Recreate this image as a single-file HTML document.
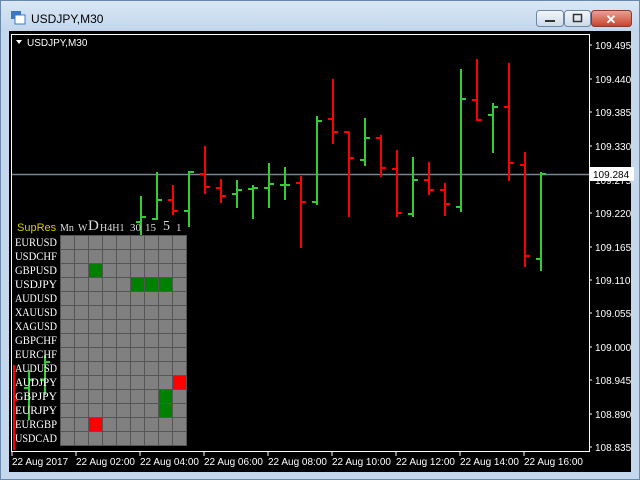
<!DOCTYPE html>
<html><head><meta charset="utf-8"><style>
body{margin:0;width:640px;height:480px;overflow:hidden;background:#c4d7ec;font-family:"Liberation Sans",sans-serif}
.g{position:absolute;left:60px;top:235px;}
</style></head><body>
<svg width="640" height="480" xmlns="http://www.w3.org/2000/svg" style="position:absolute;left:0;top:0">
<defs><linearGradient id="tb" x1="0" y1="0" x2="0" y2="1"><stop offset="0" stop-color="#dbe8f6"/><stop offset="1" stop-color="#c2d6ec"/></linearGradient>
<linearGradient id="bt" x1="0" y1="0" x2="0" y2="1"><stop offset="0" stop-color="#f4f7fb"/><stop offset="1" stop-color="#cdd9e8"/></linearGradient>
<linearGradient id="cl" x1="0" y1="0" x2="0" y2="1"><stop offset="0" stop-color="#e9a595"/><stop offset="1" stop-color="#c7412b"/></linearGradient></defs>
<rect x="0" y="0" width="640" height="480" fill="#c4d7ec"/>
<rect x="0" y="0" width="640" height="31" fill="url(#tb)"/>
<rect x="0.5" y="0.5" width="639" height="479" fill="none" stroke="#6a88aa"/>
<rect x="11" y="11" width="10" height="8" fill="#3b78c4"/><rect x="15" y="15" width="10" height="9" fill="#fff" stroke="#3b78c4"/>
<text x="31" y="23" font-size="12" fill="#000">USDJPY,M30</text>
<rect x="536.5" y="10.5" width="27" height="16" rx="3" fill="url(#bt)" stroke="#6f86a3"/>
<rect x="545" y="20" width="10" height="2" fill="#333"/>
<rect x="564.5" y="10.5" width="26" height="16" rx="3" fill="url(#bt)" stroke="#6f86a3"/>
<rect x="573.5" y="14.5" width="8" height="7" fill="none" stroke="#333" stroke-width="1.5"/>
<rect x="591.5" y="10.5" width="40" height="16" rx="3" fill="url(#cl)" stroke="#8b3a2c"/>
<text x="611" y="24" font-size="13" font-weight="bold" fill="#fff" text-anchor="middle">✕</text>
<rect x="9" y="31" width="622" height="441" fill="#000"/>
<rect x="11.5" y="34.5" width="578" height="417" fill="none" stroke="#fff"/>
<polygon points="16,40 22,40 19,44" fill="#fff"/>
<text x="27" y="46" font-size="10" fill="#fff">USDJPY,M30</text>
<g font-size="10" fill="#fff">
<text x="595" y="49">109.495</text><text x="595" y="83">109.440</text><text x="595" y="116">109.385</text><text x="595" y="150">109.330</text><text x="595" y="184">109.275</text><text x="595" y="217">109.220</text><text x="595" y="251">109.165</text><text x="595" y="284">109.110</text><text x="595" y="317">109.055</text><text x="595" y="351">109.000</text><text x="595" y="384">108.945</text><text x="595" y="418">108.890</text><text x="595" y="451">108.835</text>
</g>
<g stroke="#fff"><path d="M589 45h3M589 79h3M589 112h3M589 146h3M589 180h3M589 213h3M589 247h3M589 280h3M589 313h3M589 347h3M589 380h3M589 414h3M589 447h3"/>
<path d="M12 452v4M76 452v4M140 452v4M204 452v4M268 452v4M332 452v4M396 452v4M460 452v4M524 452v4"/></g>
<g font-size="10" fill="#fff">
<text x="12" y="465">22 Aug 2017</text><text x="76" y="465">22 Aug 02:00</text><text x="140" y="465">22 Aug 04:00</text><text x="204" y="465">22 Aug 06:00</text><text x="268" y="465">22 Aug 08:00</text><text x="332" y="465">22 Aug 10:00</text><text x="396" y="465">22 Aug 12:00</text><text x="460" y="465">22 Aug 14:00</text><text x="524" y="465">22 Aug 16:00</text>
</g>
<line x1="12" y1="174.5" x2="589" y2="174.5" stroke="#7a8594" stroke-width="1.5"/>
<rect x="590" y="167" width="44" height="14" fill="#fff"/>
<text x="593" y="178" font-size="10" fill="#000">109.284</text>
<g stroke-width="2" fill="none">
<g stroke="#32cd32">
<path d="M141 196v40M136 222h5M141 217h5"/>
<path d="M157 172v48M152 219h5M157 200h5"/>
<path d="M189 171v56M184 211h5M189 172h5"/>
<path d="M237 180v28M232 194h5M237 190h5"/>
<path d="M253 185v34M248 189h5M253 188h5"/>
<path d="M269 163v45M264 188h5M269 184h5"/>
<path d="M285 167v33M280 185h5M285 185h5"/>
<path d="M317 116v89M312 202h5M317 121h5"/>
<path d="M365 118v48M360 160h5M365 138h5"/>
<path d="M413 157v60M408 214h5M413 180h5"/>
<path d="M461 69v143M456 207h5M461 99h5"/>
<path d="M493 103v50M488 115h5M493 107h5"/>
<path d="M541 172v99M536 259h5M541 174h5"/>
<path d="M29 370v50M24 388h5M29 380h5"/>
<path d="M45 355v40M40 380h5M45 362h5"/>
</g>
<g stroke="#f00">
<path d="M173 185v30M168 200h5M173 211h5"/>
<path d="M205 146v48M200 174h5M205 187h5"/>
<path d="M221 179v24M216 188h5M221 196h5"/>
<path d="M301 176v72M296 183h5M301 202h5"/>
<path d="M333 79v65M328 119h5M333 132h5"/>
<path d="M349 132v85M344 132h5M349 158h5"/>
<path d="M381 135v42M376 138h5M381 168h5"/>
<path d="M397 150v67M392 169h5M397 213h5"/>
<path d="M429 162v33M424 180h5M429 190h5"/>
<path d="M445 183v33M440 190h5M445 204h5"/>
<path d="M477 59v62M472 100h5M477 120h5"/>
<path d="M509 63v118M504 107h5M509 163h5"/>
<path d="M525 152v115M520 165h5M525 256h5"/>
<path d="M14 365v85M14 400h3"/>
</g>
</g>
<g font-family="Liberation Serif,serif" font-size="12" fill="#fff" lengthAdjust="spacingAndGlyphs">
<text x="15" y="246" textLength="42" lengthAdjust="spacingAndGlyphs">EURUSD</text><text x="15" y="260" textLength="42" lengthAdjust="spacingAndGlyphs">USDCHF</text><text x="15" y="274" textLength="42" lengthAdjust="spacingAndGlyphs">GBPUSD</text><text x="15" y="288" textLength="42" lengthAdjust="spacingAndGlyphs">USDJPY</text><text x="15" y="302" textLength="42" lengthAdjust="spacingAndGlyphs">AUDUSD</text><text x="15" y="316" textLength="42" lengthAdjust="spacingAndGlyphs">XAUUSD</text><text x="15" y="330" textLength="42" lengthAdjust="spacingAndGlyphs">XAGUSD</text><text x="15" y="344" textLength="42" lengthAdjust="spacingAndGlyphs">GBPCHF</text><text x="15" y="358" textLength="42" lengthAdjust="spacingAndGlyphs">EURCHF</text><text x="15" y="372" textLength="42" lengthAdjust="spacingAndGlyphs">AUDUSD</text><text x="15" y="386" textLength="42" lengthAdjust="spacingAndGlyphs">AUDJPY</text><text x="15" y="400" textLength="42" lengthAdjust="spacingAndGlyphs">GBPJPY</text><text x="15" y="414" textLength="42" lengthAdjust="spacingAndGlyphs">EURJPY</text><text x="15" y="428" textLength="42" lengthAdjust="spacingAndGlyphs">EURGBP</text><text x="15" y="442" textLength="42" lengthAdjust="spacingAndGlyphs">USDCAD</text>
</g>
<text x="17" y="231" font-size="11" fill="#d8c800">SupRes</text>
<g font-family="Liberation Serif,serif" fill="#ddd">
<text x="60" y="231" font-size="10">Mn</text><text x="78" y="231" font-size="10">W</text><text x="88" y="230" font-size="15">D</text><text x="100" y="231" font-size="10">H4H1</text><text x="130" y="231" font-size="11">30</text><text x="145" y="231" font-size="11">15</text><text x="163" y="230" font-size="14">5</text><text x="176" y="231" font-size="11">1</text>
</g>
</svg>
<svg class="g" width="127" height="211" xmlns="http://www.w3.org/2000/svg">
<defs><pattern id="p" width="14" height="14" patternUnits="userSpaceOnUse"><rect width="14" height="14" fill="#555"/><rect x="1" y="1" width="13" height="13" fill="#808080"/></pattern></defs>
<rect width="127" height="211" fill="url(#p)"/>
<path d="M126.5 0v211M0 210.5h127" stroke="#555"/>
<g fill="#008000"><rect x="29" y="29" width="13" height="13"/><rect x="71" y="43" width="13" height="13"/><rect x="85" y="43" width="13" height="13"/><rect x="99" y="43" width="13" height="13"/><rect x="99" y="155" width="13" height="13"/><rect x="99" y="169" width="13" height="13"/></g>
<g fill="#f00"><rect x="113" y="141" width="13" height="13"/><rect x="29" y="183" width="13" height="13"/></g>
</svg>
</body></html>
